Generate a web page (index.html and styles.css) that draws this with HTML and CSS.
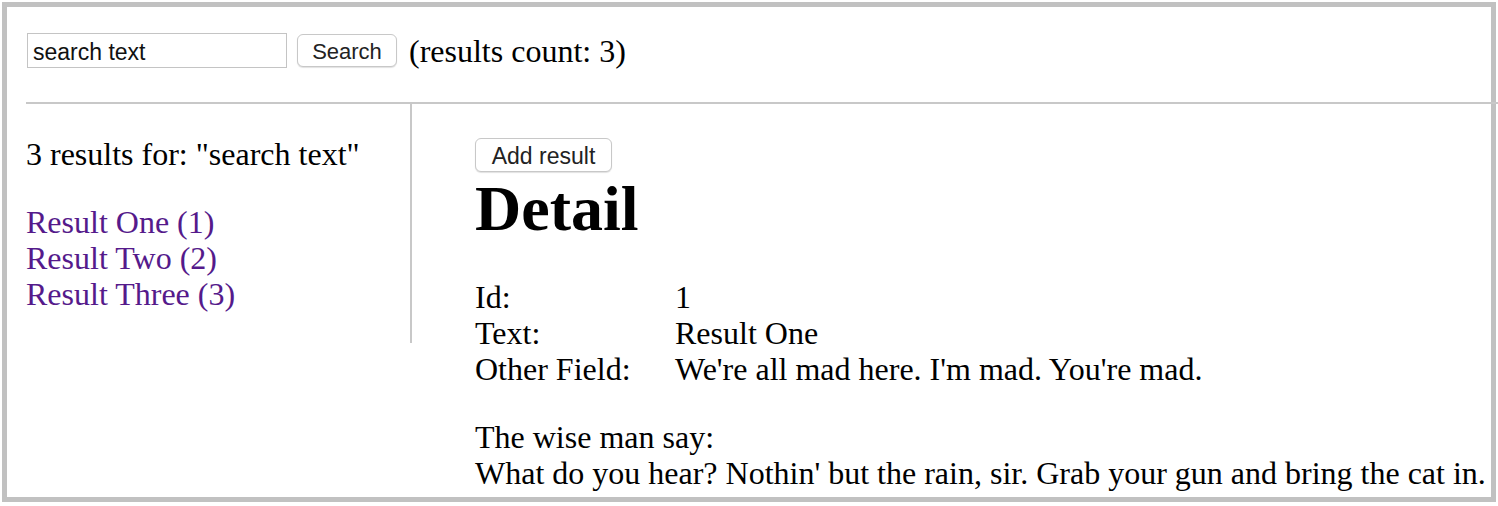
FILE: index.html
```html
<!DOCTYPE html>
<html>
<head>
<meta charset="utf-8">
<link rel="stylesheet" href="styles.css">
</head>
<body>
<div class="frame">
  <div class="topbar">
    <input class="search-input" type="text" value="search text">
    <button class="btn btn-search">Search</button>
    <span class="count">(results count: 3)</span>
  </div>
  <div class="main">
    <div class="sidebar">
      <p class="summary">3 results for: "search text"</p>
      <ul class="results">
        <li><a href="#" class="result-link">Result One (1)</a></li>
        <li><a href="#" class="result-link">Result Two (2)</a></li>
        <li><a href="#" class="result-link">Result Three (3)</a></li>
      </ul>
    </div>
    <div class="detail">
      <div class="actions"><button class="btn btn-add">Add result</button></div>
      <h1 class="title">Detail</h1>
      <div class="fields">
        <div class="field"><span class="label">Id:</span><span class="value">1</span></div>
        <div class="field"><span class="label">Text:</span><span class="value">Result One</span></div>
        <div class="field"><span class="label">Other Field:</span><span class="value">We're all mad here. I'm mad. You're mad.</span></div>
      </div>
      <p class="quote">The wise man say:<br>What do you hear? Nothin' but the rain, sir. Grab your gun and bring the cat in.</p>
    </div>
  </div>
</div>
</body>
</html>
```

FILE: styles.css
```css
html, body {
  margin: 0;
  padding: 0;
  overflow: hidden;
  background: #ffffff;
}

body {
  font-family: "Liberation Serif", "Times New Roman", serif;
  font-size: 32px;
  line-height: 36px;
  color: #000;
}

.frame {
  margin: 2px;
  border: 5px solid #c1c1c1;
  width: 1484px;
  height: 490px;
}

.topbar {
  display: flex;
  align-items: center;
  gap: 10px;
  padding: 26px 0 34px 20px;
  height: 35px;
}

.search-input {
  box-sizing: border-box;
  width: 260px;
  height: 35px;
  margin: 0;
  padding: 3px 5px 0 5px;
  border: 1px solid #c4c4c4;
  border-radius: 0;
  font-family: "Liberation Sans", Arial, sans-serif;
  font-size: 23px;
  color: #111;
  outline: none;
}

.btn {
  box-sizing: border-box;
  margin: 0;
  padding: 2px 0 0 0;
  background: #fff;
  border: 1px solid #c8c8c8;
  border-radius: 6px;
  box-shadow: 0 1px 1px rgba(0, 0, 0, 0.12);
  font-family: "Liberation Sans", Arial, sans-serif;
  font-size: 22px;
  color: #222;
}

.btn-search {
  width: 100px;
  height: 33px;
}

.count {
  margin-left: 2px;
  white-space: nowrap;
}

.main {
  display: flex;
  margin-left: 19px;
  width: 1472px;
  border-top: 2px solid #c8c8c8;
}

.sidebar {
  width: 384px;
  height: 239px;
  border-right: 2px solid #c8c8c8;
  flex: none;
}

.summary {
  margin: 32px 0 32px 0;
}

.results {
  list-style: none;
  margin: 0;
  padding: 0;
}

.result-link {
  color: #551a8b;
  text-decoration: none;
}

.detail {
  padding: 34px 0 0 63px;
  flex: 1;
}

.actions {
  display: flex;
}

.btn-add {
  width: 137px;
  height: 34px;
  font-size: 23px;
}

.title {
  margin: 0 0 33px 0;
  font-size: 64px;
  line-height: 74px;
  font-weight: bold;
}

.fields {
  display: flex;
  flex-direction: column;
}

.field {
  display: flex;
}

.label {
  width: 200px;
  flex: none;
}

.quote {
  margin: 32px 0 0 0;
  white-space: nowrap;
}
```
